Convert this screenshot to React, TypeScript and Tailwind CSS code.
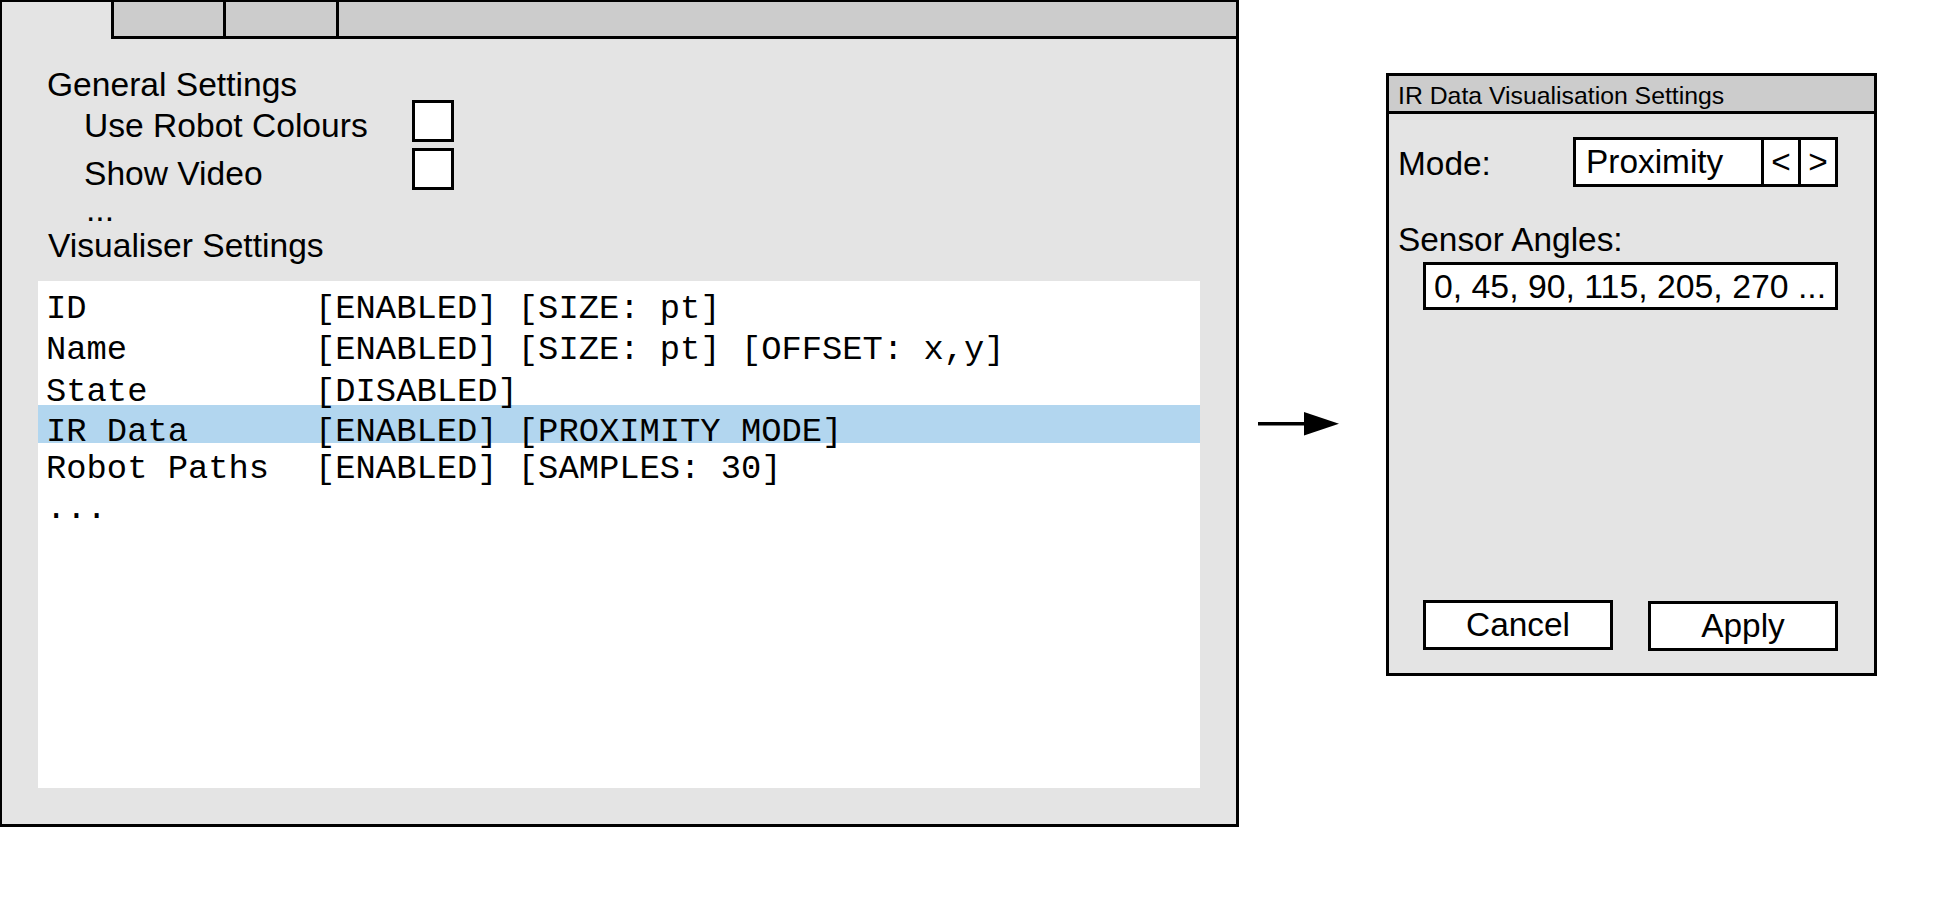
import React from 'react';

function Checkbox() {
  return <div className="w-[42px] h-[42px] -mt-[5px] border-[3px] border-black bg-white" />;
}

function Arrow() {
  return (
    <svg width="82" height="24" viewBox="0 0 82 24" className="ml-[19px] mt-[412px] shrink-0">
      <line x1="0" y1="11.7" x2="50" y2="11.7" stroke="#000" strokeWidth="3.5" />
      <polygon points="46,0 81,11.7 46,23.4" fill="#000" />
    </svg>
  );
}

const listRows = [
  { label: 'ID', value: '[ENABLED] [SIZE: pt]', cls: 'h-[40px]' },
  { label: 'Name', value: '[ENABLED] [SIZE: pt] [OFFSET: x,y]', cls: 'h-[41px] pt-[1px]' },
  { label: 'State', value: '[DISABLED]', cls: 'h-[35px] pt-[2px]' },
  { label: 'IR Data', value: '[ENABLED] [PROXIMITY MODE]', cls: 'h-[38px] pt-[7px] bg-[#b2d6ef]' },
  { label: 'Robot Paths', value: '[ENABLED] [SAMPLES: 30]', cls: 'h-[46px] pt-[6px]' },
];

function SettingsPanel() {
  return (
    <div className="w-[1239px] h-[827px] shrink-0 flex flex-col bg-[#e4e4e4] border-t-2 border-l-2 border-r-[3px] border-b-[3px] border-black">
      {/* tab strip */}
      <div className="flex h-[37px] shrink-0">
        <div className="w-[109px]" />
        <div className="w-[112px] bg-[#cccccc] border-l-[3px] border-b-[3px] border-black" />
        <div className="w-[113px] bg-[#cccccc] border-l-[3px] border-b-[3px] border-black" />
        <div className="flex-1 bg-[#cccccc] border-l-[3px] border-b-[3px] border-black" />
      </div>

      <div className="flex flex-col text-[33.6px] leading-[40px]">
        <div className="mt-[26px] h-[40px] pl-[45px]">General Settings</div>
        <div className="h-[48px] pt-[1px] pl-[82px] flex items-start">
          <div className="w-[328px]">Use Robot Colours</div>
          <div className="-mt-[1px]">
            <Checkbox />
          </div>
        </div>
        <div className="h-[37px] pt-[1px] pl-[82px] flex items-start">
          <div className="w-[328px]">Show Video</div>
          <div className="-mt-[1px]">
            <Checkbox />
          </div>
        </div>
        <div className="h-[36px] pl-[84px]">...</div>
        <div className="h-[40px] pl-[46px]">Visualiser Settings</div>
      </div>

      <div className="ml-[36px] mt-[15px] w-[1162px] h-[507px] bg-white pt-[8px] font-['Liberation_Mono',monospace] text-[33.8px] leading-[40px] whitespace-pre">
        {listRows.map((r) => (
          <div key={r.label} className={`flex pl-[8px] ${r.cls}`}>
            <div className="w-[269px] h-[40px]">{r.label}</div>
            <div className="h-[40px]">{r.value}</div>
          </div>
        ))}
        <div className="h-[40px] pl-[8px]">...</div>
      </div>
    </div>
  );
}

function DialogBox() {
  return (
    <div className="ml-[46px] mt-[73px] w-[491px] h-[603px] shrink-0 flex flex-col bg-[#e4e4e4] border-[3px] border-black">
      <div className="h-[38px] shrink-0 bg-[#cccccc] border-b-[3px] border-black pl-[9px] pt-[3px] text-[24.8px] leading-[33px]">
        IR Data Visualisation Settings
      </div>

      <div className="mt-[23px] h-[50px] flex items-center text-[33.4px] leading-[40px]">
        <div className="w-[184px] pl-[9px] pt-[3px]">Mode:</div>
        <div className="w-[265px] h-[50px] flex border-[3px] border-black bg-white">
          <div className="flex-1 pl-[10px] flex items-center">Proximity</div>
          <div className="w-[37px] border-l-[3px] border-black flex items-center justify-center">&lt;</div>
          <div className="w-[37px] border-l-[3px] border-black flex items-center justify-center">&gt;</div>
        </div>
      </div>

      <div className="mt-[33px] h-[42px] pl-[9px] text-[33.4px] leading-[40px]">Sensor Angles:</div>
      <div className="ml-[34px] w-[415px] h-[48px] border-[3px] border-black bg-white pl-[8px] flex items-center text-[33.8px] leading-[40px] whitespace-pre">
        0, 45, 90, 115, 205, 270 ...
      </div>

      <div className="mt-auto mb-[22px] flex items-start ml-[34px] text-[33.4px] leading-[40px]">
        <div className="w-[190px] h-[50px] border-[3px] border-black bg-white flex items-center justify-center">Cancel</div>
        <div className="ml-[35px] mt-[1px] w-[190px] h-[50px] border-[3px] border-black bg-white flex items-center justify-center">Apply</div>
      </div>
    </div>
  );
}

export default function App() {
  return (
    <div className="w-[1950px] h-[900px] bg-white flex items-start text-black font-['Liberation_Sans',Arial,sans-serif]">
      <SettingsPanel />
      <Arrow />
      <DialogBox />
    </div>
  );
}
